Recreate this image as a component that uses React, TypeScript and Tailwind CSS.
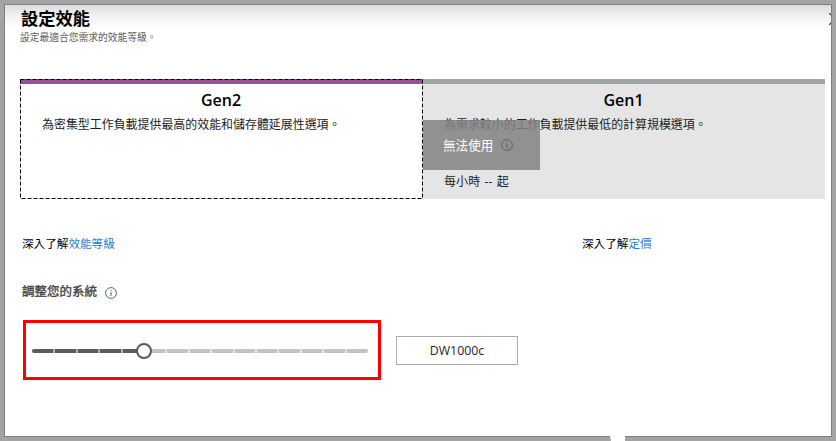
import type { ReactNode } from "react";

const TICKS = [1, 2, 3, 4, 6, 7, 8, 9, 10, 11, 12, 13, 14];
const STEPS = 15;
const VALUE = 5;

function InfoIcon({ className }: { className: string }) {
  return (
    <svg viewBox="0 0 12 12" className={className} fill="none" stroke="currentColor">
      <circle cx="6" cy="6" r="5.4" strokeWidth="0.9" />
      <path d="M6 5v4M6 3v1" strokeWidth="1" />
    </svg>
  );
}

function TierTitle({ children }: { children: ReactNode }) {
  return (
    <h2 className="pr-px text-center text-[16px] leading-[22px] font-semibold text-black">
      {children}
    </h2>
  );
}

function Slider() {
  return (
    <div className="flex h-[60px] w-[358px] items-center border-[3px] border-[#ff0000] pt-[2px] pl-[6px]">
      <div className="relative h-[4px] w-[336px] rounded-[2px] bg-[#c4c3c2]">
        <div
          className="h-[4px] rounded-l-[2px] bg-[#5c5b5a]"
          style={{ width: `${(VALUE / STEPS) * 100}%` }}
        />
        {TICKS.map((t) => (
          <span
            key={t}
            className={`absolute top-0 h-[4px] w-[2px] -translate-x-px ${t < VALUE ? "bg-[#b5b4b3]" : "bg-[#e9e8e8]"}`}
            style={{ left: Math.round((t / STEPS) * 336) }}
          />
        ))}
        <span className="absolute top-[-6px] left-[104px] size-[16px] rounded-full border-2 border-[#5c5b5a] bg-white" />
      </div>
    </div>
  );
}

export default function App() {
  return (
    <div className="relative h-[441px] w-[836px] overflow-hidden bg-[#a3a3a3] p-[4px] font-['Open_Sans','Noto_Sans_CJK_TC',sans-serif] text-[12px] text-[#222]">
      <main className="relative h-[433px] w-[828px] overflow-hidden border border-[#7f7f7f] bg-white bg-linear-to-b from-[#dcdcdc] via-[#f3f3f3] to-white bg-[length:100%_24px] bg-no-repeat pl-[15px]">
        <header className="h-[74px] pt-[3px]">
          <h1 className="h-[23px] pl-px text-[17.3px] leading-[22px] font-bold text-black">設定效能</h1>
          <p className="text-[9.75px] leading-[14px] text-[#5c5c5c]">設定最適合您需求的效能等級。</p>
        </header>
        <svg viewBox="0 0 12 12" className="absolute top-[8px] left-[824px] size-[12px]" stroke="#333" strokeWidth="1.2">
          <path d="M0 0L12 12M12 0L0 12" />
        </svg>

        <section className="flex h-[120px] w-[805px]">
          <article className="relative w-[403px] bg-white">
            <div className="h-[5px] bg-[#9b4f96]" />
            <div className="pt-[5px]">
              <TierTitle>Gen2</TierTitle>
              <p className="pt-[6px] pl-[22px] text-[11.95px] leading-[16px]">為密集型工作負載提供最高的效能和儲存體延展性選項。</p>
            </div>
            <svg className="absolute inset-0 h-[120px] w-[403px]" fill="none" stroke="#000" strokeDasharray="4 2">
              <rect x="0.5" y="0.5" width="402" height="119" />
            </svg>
          </article>
          <article className="relative w-[402px] bg-[#e5e5e5]">
            <div className="h-[5px] bg-[#a0a5a8]" />
            <div className="pt-[5px]">
              <TierTitle>Gen1</TierTitle>
              <p className="pt-[6px] pl-[21px] text-[11.95px] leading-[16px]">為需求較小的工作負載提供最低的計算規模選項。</p>
              <p className="pt-[41px] pl-[21px] leading-[16px] tracking-[0.1px] [word-spacing:1px]">每小時 -- 起</p>
            </div>
            <div className="absolute top-[41px] left-0 flex h-[50px] w-[117px] items-center gap-[8px] bg-[#828282]/85 pl-[20px] text-[12.6px] text-white">
              <span className="pt-[2px]">無法使用</span>
              <InfoIcon className="size-[12px] text-[#5e5e5e]" />
            </div>
          </article>
        </section>

        <section className="flex pt-[36px] pl-[2px] text-[11.6px] leading-[18px] text-black">
          <p className="w-[560px]">
            深入了解<a className="text-[#2b7cd3]">效能等級</a>
          </p>
          <p>
            深入了解<a className="text-[#2b7cd3]">定價</a>
          </p>
        </section>

        <section>
          <div className="mt-[30px] flex h-[18px] items-center gap-[8px] pl-[2px] text-[12.5px] leading-[18px] text-[#444]">
            <h3 className="[-webkit-text-stroke:0.35px_#444]">調整您的系統</h3>
            <InfoIcon className="mt-[2px] size-[12px] text-[#555]" />
          </div>
          <div className="mt-[19px] ml-[3px] flex items-center gap-[15px]">
            <Slider />
            <div className="flex h-[29px] w-[122px] items-center justify-center border border-[#adadad] pt-[2px] text-[12.3px] text-[#222]">
              DW1000c
            </div>
          </div>
        </section>
      </main>
      <svg viewBox="0 0 16 5" className="absolute top-[436px] left-[610px] h-[5px] w-[16px]">
        <path d="M0 0H15V5H1Z" fill="#fff" />
      </svg>
    </div>
  );
}
